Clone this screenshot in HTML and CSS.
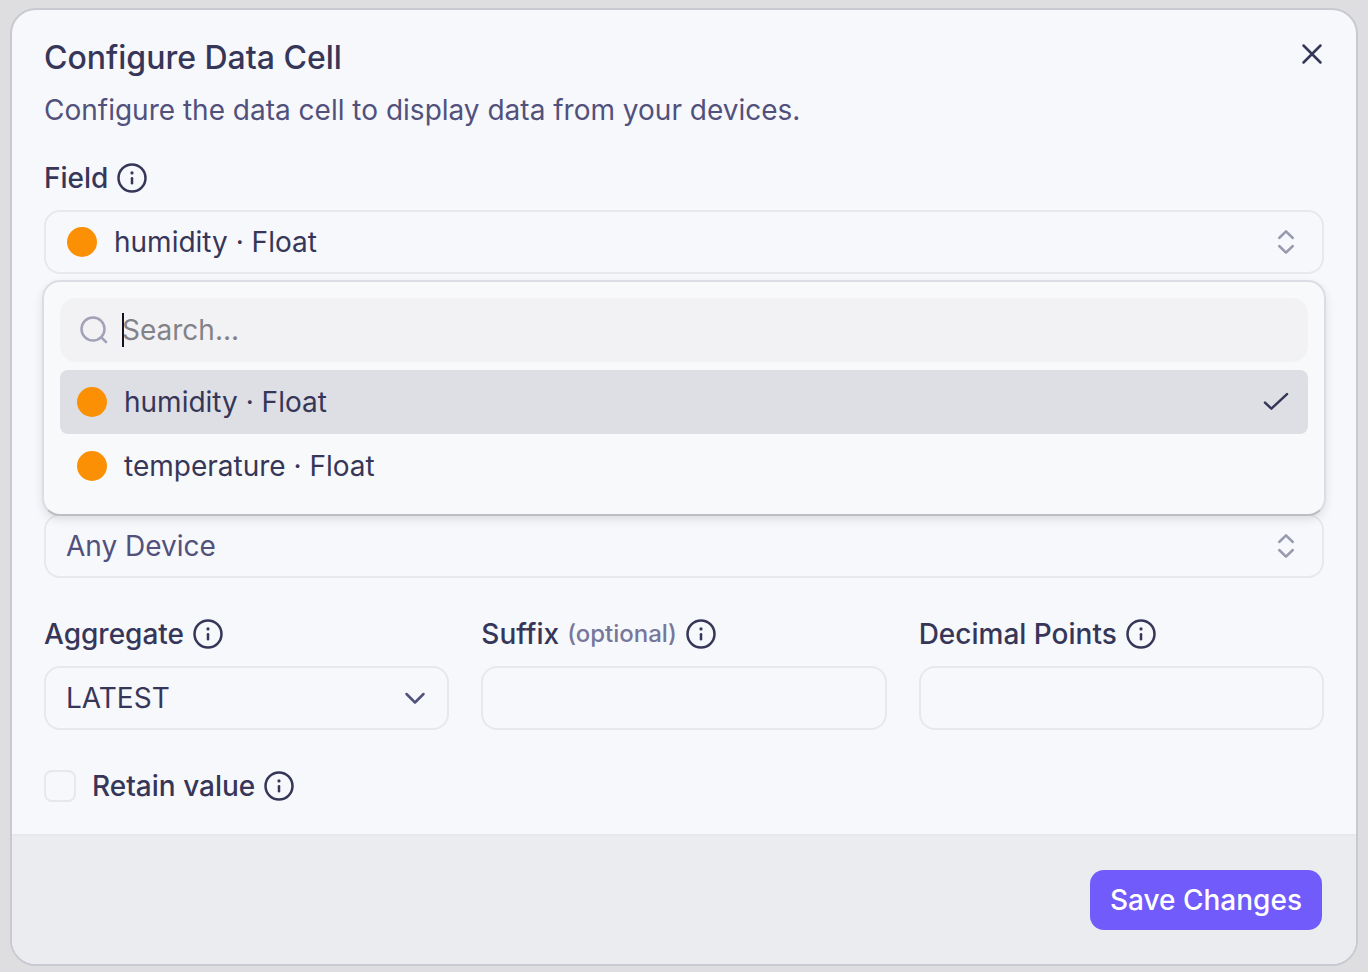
FILE: index.html
```html
<!DOCTYPE html>
<html lang="en">

<head>
    <meta charset="UTF-8">
    <meta name="viewport" content="width=device-width, initial-scale=1.0">
    <title>Configure Data Cell</title>
    <link rel="stylesheet" href="styles.css">
</head>

<body>
    <svg class="sprite" aria-hidden="true">
        <symbol id="icon-info" viewBox="0 0 32 32">
            <circle cx="16" cy="16" r="13.5" />
            <path d="M16 16.2v5" />
            <circle class="dot" cx="16" cy="10.9" r="1.6" />
        </symbol>
        <symbol id="icon-updown" viewBox="0 0 32 32">
            <path d="M9.2 12L16 5.4l6.8 6.6M9.2 20l6.8 6.6 6.8-6.6" />
        </symbol>
    </svg>

    <form class="modal" role="dialog" aria-labelledby="modal-title">
        <div class="modal-body">
            <div class="header">
                <h2 id="modal-title">Configure Data Cell</h2>
                <button type="button" class="close" aria-label="Close">
                    <svg class="icon" viewBox="0 0 32 32"><path d="M7.5 7.5l17 17M24.5 7.5l-17 17" /></svg>
                </button>
            </div>
            <p class="description">Configure the data cell to display data from your devices.</p>

            <div class="group">
                <div class="label-row">
                    <label for="field">Field</label>
                    <svg class="icon"><use href="#icon-info" /></svg>
                </div>
                <div class="combobox">
                    <button type="button" class="control" id="field" aria-expanded="true">
                        <span class="swatch"></span>
                        <span class="value">humidity · Float</span>
                        <svg class="icon updown"><use href="#icon-updown" /></svg>
                    </button>
                    <div class="popover">
                        <div class="search">
                            <svg class="icon" viewBox="0 0 32 32"><circle cx="15" cy="15" r="11.5" /><path d="M23.4 23.4l4.6 4.6" /></svg>
                            <input type="text" placeholder="Search..." aria-label="Search fields">
                            <span class="caret"></span>
                        </div>
                        <div class="options" role="listbox">
                            <button type="button" class="option selected" role="option" aria-selected="true">
                                <span class="swatch"></span>
                                <span class="value">humidity · Float</span>
                                <svg class="icon" viewBox="0 0 32 32"><path d="M5 16.7l6.4 6L27 8.2" /></svg>
                            </button>
                            <button type="button" class="option" role="option" aria-selected="false">
                                <span class="swatch"></span>
                                <span class="value">temperature · Float</span>
                            </button>
                        </div>
                    </div>
                </div>
            </div>

            <div class="group device">
                <button type="button" class="control placeholder">
                    <span class="value">Any Device</span>
                    <svg class="icon updown"><use href="#icon-updown" /></svg>
                </button>
            </div>

            <div class="columns">
                <div class="group">
                    <div class="label-row">
                        <label for="aggregate">Aggregate</label>
                        <svg class="icon"><use href="#icon-info" /></svg>
                    </div>
                    <div class="select-wrap">
                        <select class="control" id="aggregate">
                            <option>LATEST</option>
                        </select>
                        <svg class="icon chevron" viewBox="0 0 32 32"><path d="M7.5 12l8.5 8.5 8.5-8.5" /></svg>
                    </div>
                </div>
                <div class="group">
                    <div class="label-row">
                        <label for="suffix">Suffix <span class="optional">(optional)</span></label>
                        <svg class="icon"><use href="#icon-info" /></svg>
                    </div>
                    <input type="text" class="control" id="suffix">
                </div>
                <div class="group">
                    <div class="label-row">
                        <label for="decimals">Decimal Points</label>
                        <svg class="icon"><use href="#icon-info" /></svg>
                    </div>
                    <input type="text" class="control" id="decimals">
                </div>
            </div>

            <div class="check-row">
                <input type="checkbox" id="retain">
                <div class="label-row">
                    <label for="retain">Retain value</label>
                    <svg class="icon"><use href="#icon-info" /></svg>
                </div>
            </div>
        </div>

        <div class="footer">
            <button type="submit" class="save">Save Changes</button>
        </div>
    </form>
</body>

</html>
```

FILE: styles.css
```css
* {
    box-sizing: border-box;
}

body {
    margin: 0;
    padding: 8px 10px 6px;
    background: #dedee0;
    color: #363659;
    font-family: Inter, sans-serif;
    font-size: 28px;
    line-height: 32px;
}

button,
input,
select {
    font: inherit;
    color: inherit;
}

button {
    border: none;
    padding: 0;
    background: none;
    cursor: pointer;
}

.sprite {
    position: absolute;
    width: 0;
    height: 0;
}

.icon {
    flex: none;
    display: block;
    width: 32px;
    height: 32px;
    fill: none;
    stroke: currentColor;
    stroke-width: 2.5;
    stroke-linecap: round;
    stroke-linejoin: round;
}

.dot {
    fill: currentColor;
    stroke: none;
}

.modal {
    border: 2px solid #c9c9d2;
    border-radius: 26px;
    background: #f7f8fb;
    overflow: hidden;
}

.modal-body {
    padding: 28px 32px 32px;
}

.header {
    display: flex;
    justify-content: space-between;
}

.header h2 {
    margin: 0;
    font-size: 32px;
    line-height: 40px;
    font-weight: 500;
}

.close {
    align-self: flex-start;
    margin-right: -4px;
}

.description {
    margin: 12px 0 32px;
    line-height: 40px;
    color: #51517c;
}

.label-row,
.label-row label {
    display: flex;
    align-items: center;
    gap: 8px;
    font-weight: 500;
}

.group .label-row {
    margin-bottom: 16px;
}

.optional {
    font-size: 24px;
    color: #77779a;
}

.control {
    display: flex;
    align-items: center;
    width: 100%;
    height: 64px;
    padding: 0 20px;
    border: 2px solid #e8e8ea;
    border-radius: 16px;
    background: transparent;
    text-align: left;
}

.control.placeholder {
    color: #51517c;
}

.value {
    flex: 1;
    text-align: left;
}

.swatch {
    width: 30px;
    height: 30px;
    margin: 0 17px 0 1px;
    border-radius: 50%;
    background: #fb9005;
}

.updown {
    color: #9999b0;
}

.combobox {
    position: relative;
}

.popover {
    position: absolute;
    top: 70px;
    left: -2px;
    right: -2px;
    z-index: 1;
    padding: 16px;
    border: 2px solid #dcdce4;
    border-bottom-color: #bdbdc4;
    border-radius: 18px;
    background: #f8f9fb;
    box-shadow: 0 4px 12px -2px rgba(0, 0, 0, 0.14);
}

.search {
    position: relative;
    display: flex;
    align-items: center;
    gap: 12px;
    height: 64px;
    margin-bottom: 8px;
    padding: 0 18px;
    border-radius: 16px;
    background: #f2f2f4;
}

.search .icon {
    color: #a1a1b8;
}

.search input {
    flex: 1;
    padding: 0;
    border: none;
    outline: none;
    background: transparent;
}

.search input::placeholder {
    color: #828288;
}

.caret {
    position: absolute;
    left: 62px;
    top: 15px;
    width: 2px;
    height: 34px;
    background: #111122;
}

.option {
    display: flex;
    align-items: center;
    width: 100%;
    height: 64px;
    padding: 0 16px;
    border-radius: 8px;
}

.option.selected {
    background: #dddfe4;
}

/* leaves room for the open list above */
.device {
    margin-top: 240px;
}

.columns {
    display: grid;
    grid-template-columns: repeat(3, 1fr);
    gap: 32px;
    margin: 40px 0;
}

.select-wrap {
    position: relative;
}

select.control {
    appearance: none;
}

.chevron {
    position: absolute;
    right: 18px;
    top: 16px;
    color: #51517c;
    pointer-events: none;
}

.check-row {
    display: flex;
    align-items: center;
    gap: 16px;
}

.check-row input {
    appearance: none;
    width: 32px;
    height: 32px;
    margin: 0;
    border: 2px solid #e8e8ea;
    border-radius: 8px;
}

.footer {
    display: flex;
    justify-content: flex-end;
    padding: 34px;
    border-top: 2px solid #e8e8ea;
    background: #ebecef;
}

.save {
    height: 60px;
    padding: 0 20px;
    border-radius: 14px;
    background: #715bfb;
    color: #fff;
    font-weight: 500;
}
```
